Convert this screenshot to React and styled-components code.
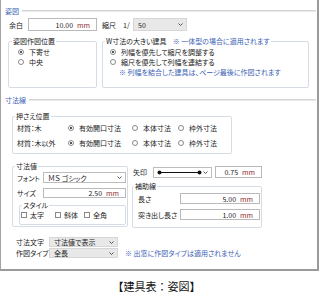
import React from "react";
import styled, { createGlobalStyle } from "styled-components";

const GlobalStyle = createGlobalStyle`
  html, body { margin: 0; padding: 0; background: #fff; }
  body { font-family: "Noto Sans CJK JP", "Noto Sans", sans-serif; color: #222; }
`;

const Page = styled.div`
  width: 320px;
  height: 302px;
  overflow: hidden;
  background: #fff;
`;

const Frame = styled.div`
  box-sizing: border-box;
  width: 319px;
  height: 271px;
  border-left: 1px solid #a3a3a3;
  border-right: 2px solid #9a9a9a;
  border-bottom: 2px solid #9a9a9a;
  padding: 6px 0 0 3px;
  font-size: 7px;
  line-height: 10px;
  font-feature-settings: "palt";
  display: flex;
  flex-direction: column;
`;

const SectionHeader = styled.div`
  display: flex;
  align-items: center;
  height: 10px;
  gap: 3px;
  margin-top: ${(p) => p.$mt || 0}px;
  color: #3c5fb6;
`;

const SectionTitle = styled.span`
  padding-left: 1px;
  white-space: nowrap;
`;

const HeaderLine = styled.div`
  flex: 1;
  height: 0;
  border-top: 1px solid #d4d4d4;
  border-bottom: 1px solid #e9e9e9;
  margin-right: 1px;
`;

const Row = styled.div`
  display: flex;
  align-items: center;
  height: ${(p) => p.$h}px;
  margin-top: ${(p) => p.$mt || 0}px;
  padding-left: ${(p) => p.$pl || 0}px;
  white-space: nowrap;
`;

const Label = styled.span`
  flex: none;
  width: ${(p) => p.$w}px;
  margin-left: ${(p) => p.$ml || 0}px;
  white-space: nowrap;
`;

const TextBox = styled.div`
  flex: none;
  box-sizing: border-box;
  width: ${(p) => p.$w}px;
  height: ${(p) => p.$h}px;
  margin-left: ${(p) => p.$ml || 0}px;
  border: 1px solid #b9b9b9;
  background: #fff;
  display: flex;
  align-items: center;
  justify-content: flex-end;
  gap: 4px;
  padding-right: 6px;
`;

const Unit = styled.span`
  color: #8b2c2c;
`;

const Select = styled.div`
  flex: none;
  box-sizing: border-box;
  width: ${(p) => p.$w}px;
  height: ${(p) => p.$h}px;
  border: 1px solid ${(p) => (p.$gray ? "#d6d6d6" : "#bcbcbc")};
  background: ${(p) => (p.$gray ? "#e8e8e8" : "#fff")};
  display: flex;
  align-items: center;
  justify-content: space-between;
  padding: 0 3px 0 ${(p) => (p.$pl !== undefined ? p.$pl : 4)}px;
`;

const Chevron = () => (
  <svg width="5" height="3" viewBox="0 0 5 3" style={{ flex: "none" }}>
    <path d="M0.5 0.5 L2.5 2.5 L4.5 0.5" fill="none" stroke="#555" strokeWidth="1" />
  </svg>
);

const ArrowGlyph = () => (
  <svg width="45" height="5" viewBox="0 0 45 5">
    <line x1="2.5" y1="2.5" x2="42.5" y2="2.5" stroke="#111" strokeWidth="1" />
    <circle cx="2.5" cy="2.5" r="2" fill="#111" />
    <circle cx="42.5" cy="2.5" r="2" fill="#111" />
  </svg>
);

const GroupRow = styled.div`
  display: flex;
  align-items: flex-start;
  gap: ${(p) => p.$gap || 0}px;
  margin-top: ${(p) => p.$mt || 0}px;
  padding-left: ${(p) => p.$pl || 0}px;
`;

const Group = styled.fieldset`
  box-sizing: border-box;
  flex: none;
  margin: ${(p) => p.$mt || 0}px 0 0 ${(p) => p.$ml || 0}px;
  padding: 0;
  min-width: 0;
  width: ${(p) => p.$w}px;
  height: ${(p) => p.$h}px;
  border: 1px solid #d6dce5;
  border-radius: 2px;
`;

const Legend = styled.legend`
  margin-left: ${(p) => p.$ml || 2}px;
  padding: 0 1px;
  line-height: 8px;
  font-size: 7px;
  color: #222;
  white-space: nowrap;
`;

const GroupBody = styled.div`
  padding: ${(p) => p.$pad};
  display: flex;
  flex-direction: column;
  gap: ${(p) => p.$gap || 0}px;
`;

const Note = styled.span`
  color: #3c5fb6;
  margin-left: ${(p) => p.$ml || 0}px;
  padding-left: ${(p) => p.$pl || 0}px;
  white-space: nowrap;
`;

const Option = styled.label`
  display: flex;
  align-items: center;
  gap: ${(p) => p.$gap || 5}px;
  height: 10px;
  white-space: nowrap;
`;

const RadioDot = styled.span`
  flex: none;
  box-sizing: border-box;
  width: 6px;
  height: 6px;
  border-radius: 50%;
  border: 1px solid #8a8a8a;
  background: #fff;
  display: grid;
  place-items: center;
  &::after {
    content: "";
    width: 2px;
    height: 2px;
    border-radius: 50%;
    background: ${(p) => (p.$on ? "#1e1e1e" : "transparent")};
  }
`;

const CheckBox = styled.span`
  flex: none;
  box-sizing: border-box;
  width: 6px;
  height: 6px;
  border: 1px solid #8a8a8a;
  background: #fff;
`;

const Radio = ({ on, children }) => (
  <Option>
    <RadioDot $on={on} />
    <span>{children}</span>
  </Option>
);

const Check = ({ children }) => (
  <Option $gap={3}>
    <CheckBox />
    <span>{children}</span>
  </Option>
);

const ChoiceGrid = styled.div`
  display: grid;
  grid-template-columns: ${(p) => p.$cols};
  row-gap: ${(p) => p.$rowGap || 0}px;
  align-items: center;
  white-space: nowrap;
`;

const Column = styled.div`
  display: flex;
  flex-direction: column;
  width: ${(p) => p.$w}px;
`;

const Caption = styled.div`
  width: 313px;
  margin-top: 8px;
  text-align: center;
  font-size: 11px;
  line-height: 14px;
  color: #111;
`;

export default function App() {
  return (
    <Page>
      <GlobalStyle />
      <Frame>
        <SectionHeader>
          <SectionTitle>姿図</SectionTitle>
          <HeaderLine />
        </SectionHeader>

        <Row $mt={2} $h={13} $pl={5}>
          <Label $w={19}>余白</Label>
          <TextBox $w={69} $h={13}>
            <span>10.00</span>
            <Unit>mm</Unit>
          </TextBox>
          <Label $w={21} $ml={5}>縮尺</Label>
          <Label $w={10}>1/</Label>
          <Select $w={54} $h={13} $gray>
            <span>50</span>
            <Chevron />
          </Select>
        </Row>

        <GroupRow $mt={6} $pl={4} $gap={5}>
          <Group $w={89} $h={51}>
            <Legend $ml={3}>姿図作図位置</Legend>
            <GroupBody $pad="2px 0 0 9px">
              <Radio on>下寄せ</Radio>
              <Radio>中央</Radio>
            </GroupBody>
          </Group>
          <Group $w={207} $h={51}>
            <Legend $ml={2}>
              W寸法の大きい建具<Note $ml={6}>※ 一体型の場合に適用されます</Note>
            </Legend>
            <GroupBody $pad="2px 0 0 7px">
              <Radio on>列幅を優先して縮尺を調整する</Radio>
              <Radio>縮尺を優先して列幅を連結する</Radio>
              <Note $pl={9}>※ 列幅を結合した建具は、ページ最後に作図されます</Note>
            </GroupBody>
          </Group>
        </GroupRow>

        <SectionHeader $mt={7}>
          <SectionTitle>寸法線</SectionTitle>
          <HeaderLine />
        </SectionHeader>

        <Group $w={220} $h={42} $mt={7} $ml={8}>
          <Legend $ml={2}>押さえ位置</Legend>
          <GroupBody $pad="3px 0 0 4px">
            <ChoiceGrid $cols="51px 64px 46px auto" $rowGap={5}>
              <span>材質：木</span>
              <Radio on>有効開口寸法</Radio>
              <Radio>本体寸法</Radio>
              <Radio>枠外寸法</Radio>
              <span>材質：木以外</span>
              <Radio on>有効開口寸法</Radio>
              <Radio>本体寸法</Radio>
              <Radio>枠外寸法</Radio>
            </ChoiceGrid>
          </GroupBody>
        </Group>

        <GroupRow $mt={8} $pl={8} $gap={4}>
          <Group $w={116} $h={65}>
            <Legend $ml={2}>寸法値</Legend>
            <GroupBody $pad="2px 0 0 4px">
              <Row $h={11}>
                <Label $w={26}>フォント</Label>
                <Select $w={83} $h={11}>
                  <span>ＭＳ ゴシック</span>
                  <Chevron />
                </Select>
              </Row>
              <Row $h={10} $mt={5}>
                <Label $w={26}>サイズ</Label>
                <TextBox $w={83} $h={10}>
                  <span>2.50</span>
                  <Unit>mm</Unit>
                </TextBox>
              </Row>
              <Group $w={107} $h={24} $mt={3} $ml={2}>
                <Legend $ml={2}>スタイル</Legend>
                <GroupBody $pad="1px 0 0 1px">
                  <ChoiceGrid $cols="34px 29px auto">
                    <Check>太字</Check>
                    <Check>斜体</Check>
                    <Check>全角</Check>
                  </ChoiceGrid>
                </GroupBody>
              </Group>
            </GroupBody>
          </Group>

          <Column $w={130}>
            <Row $h={12} $mt={4} $pl={1}>
              <Label $w={20}>矢印</Label>
              <Select $w={59} $h={11} $pl={3}>
                <ArrowGlyph />
                <Chevron />
              </Select>
              <TextBox $w={47} $h={12} $ml={3}>
                <span>0.75</span>
                <Unit>mm</Unit>
              </TextBox>
            </Row>
            <Group $w={130} $h={46} $mt={4}>
              <Legend $ml={1}>補助線</Legend>
              <GroupBody $pad="3px 0 0 5px" $gap={5}>
                <Row $h={11}>
                  <Label $w={42}>長さ</Label>
                  <TextBox $w={80} $h={11}>
                    <span>5.00</span>
                    <Unit>mm</Unit>
                  </TextBox>
                </Row>
                <Row $h={11}>
                  <Label $w={42}>突き出し長さ</Label>
                  <TextBox $w={80} $h={11}>
                    <span>1.00</span>
                    <Unit>mm</Unit>
                  </TextBox>
                </Row>
              </GroupBody>
            </Group>
          </Column>
        </GroupRow>

        <Row $h={10} $mt={9} $pl={12}>
          <Label $w={33}>寸法文字</Label>
          <Select $w={69} $h={10} $gray>
            <span>寸法値で表示</span>
            <Chevron />
          </Select>
        </Row>
        <Row $h={10} $mt={1} $pl={12}>
          <Label $w={33}>作図タイプ</Label>
          <Select $w={69} $h={10} $gray>
            <span>全長</span>
            <Chevron />
          </Select>
          <Note $ml={7}>※ 出窓に作図タイプは適用されません</Note>
        </Row>
      </Frame>
      <Caption>【建具表：姿図】</Caption>
    </Page>
  );
}
